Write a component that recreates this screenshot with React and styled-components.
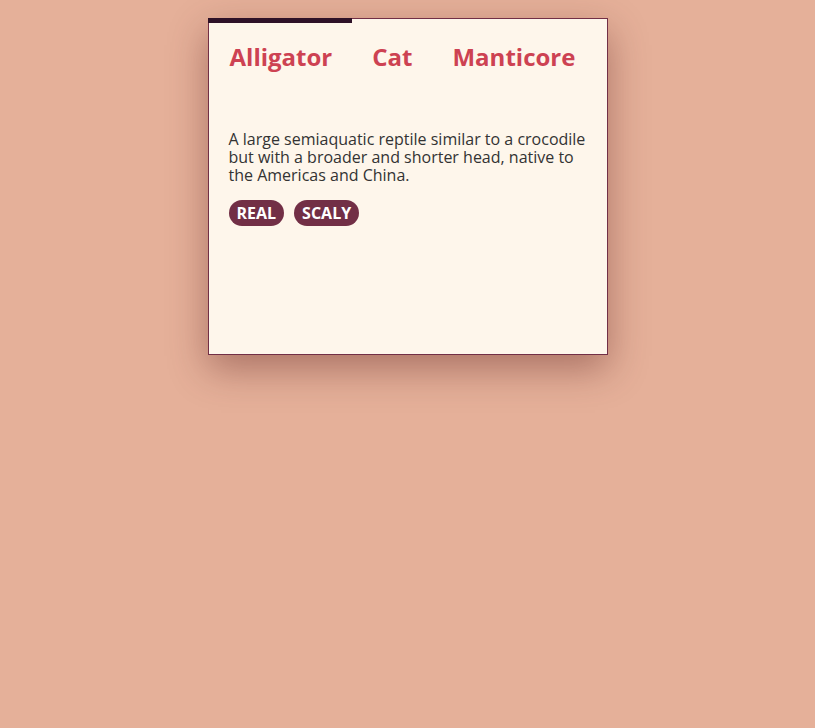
import React, { useState } from "react";
import styled, { createGlobalStyle } from "styled-components";

const Global = createGlobalStyle`
  html, body { margin: 0; padding: 0; background: #e5b099; }
  body { font-family: "Open Sans", "Liberation Sans", sans-serif; }
  * { box-sizing: border-box; }
`;

const Page = styled.div`
  min-height: 728px;
  display: flex;
  justify-content: center;
  align-items: flex-start;
  padding-top: 18px;
`;

const Card = styled.div`
  position: relative;
  width: 400px;
  height: 337px;
  background: #fef6eb;
  border: 1px solid #722f46;
  box-shadow: 0 14px 36px rgba(90, 30, 30, 0.42);
`;

const TabBar = styled.div`
  display: flex;
  padding: 21px 0 0 1px;
`;

const Tab = styled.button`
  position: relative;
  background: none;
  border: none;
  margin: 0;
  padding: 0 20px;
  font-family: "Open Sans", "Liberation Sans", sans-serif;
  font-weight: 700;
  font-size: 24px;
  line-height: 33px;
  color: #cd4252;
  cursor: pointer;
`;

const Indicator = styled.div`
  position: absolute;
  top: -1px;
  left: -1px;
  height: 5px;
  background: #2e1228;
`;

const Panel = styled.div`
  padding: 57px 20px 0;
`;

const Description = styled.p`
  margin: 0;
  font-size: 16px;
  line-height: 18px;
  color: #333;
`;

const Tags = styled.div`
  display: flex;
  gap: 10px;
  margin-top: 16px;
`;

const Tag = styled.span`
  display: inline-flex;
  align-items: center;
  height: 26px;
  padding: 0 8px;
  border-radius: 13px;
  background: #722f46;
  color: #fff;
  font-weight: 700;
  font-size: 16px;
  text-transform: uppercase;
`;

const animals = [
  {
    name: "Alligator",
    desc: "A large semiaquatic reptile similar to a crocodile but with a broader and shorter head, native to the Americas and China.",
    tags: ["Real", "Scaly"],
  },
  { name: "Cat", desc: "A small domesticated carnivorous mammal.", tags: ["Real", "Furry"] },
  { name: "Manticore", desc: "A mythical beast with a lion's body and a human head.", tags: ["Mythical"] },
];

export default function App() {
  const [active] = useState(0);
  const a = animals[active];
  return (
    <>
      <Global />
      <Page>
        <Card>
          <Indicator style={{ width: 144 }} />
          <TabBar>
            {animals.map((x) => (
              <Tab key={x.name}>{x.name}</Tab>
            ))}
          </TabBar>
          <Panel>
            <Description>{a.desc}</Description>
            <Tags>
              {a.tags.map((t) => (
                <Tag key={t}>{t}</Tag>
              ))}
            </Tags>
          </Panel>
        </Card>
      </Page>
    </>
  );
}
